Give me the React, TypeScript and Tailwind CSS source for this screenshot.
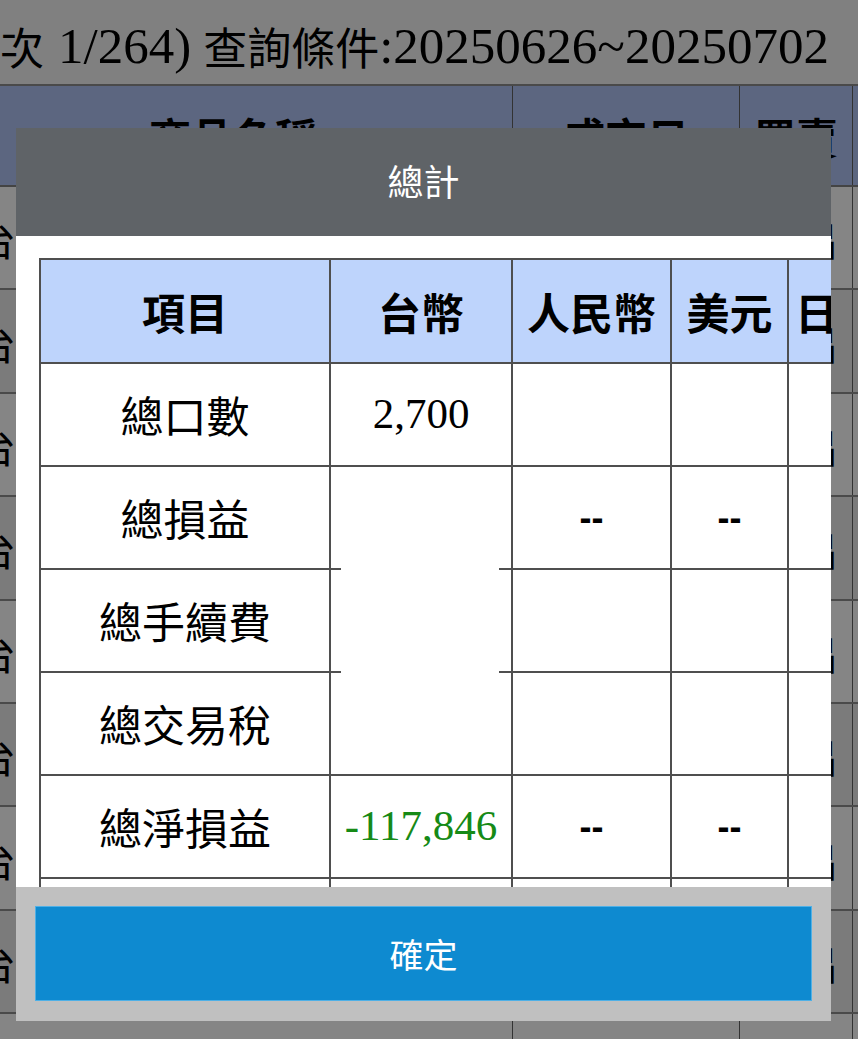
import React from 'react'

const cjk = "font-['Noto_Sans_CJK_TC','Noto_Sans',sans-serif]"
const serif = "font-['Liberation_Serif','Noto_Sans_CJK_TC',serif]"

const bgRows = ['賣', '買', '買', '賣', '賣', '買', '買', '賣', '賣']

const rows: { label: string; twd?: string; green?: boolean; cny?: string; usd?: string; hide?: boolean }[] = [
  { label: '總口數', twd: '2,700' },
  { label: '總損益', cny: '--', usd: '--' },
  { label: '總手續費', hide: true },
  { label: '總交易稅', hide: true },
  { label: '總淨損益', twd: '-117,846', green: true, cny: '--', usd: '--' },
  { label: '' },
]

function Background() {
  return (
    <div className="flex flex-col">
      {/* query line */}
      <div className={`h-[84px] pt-[8px] flex items-center whitespace-nowrap text-[51px] leading-none text-black ${serif}`}>
        <span className={`${cjk} text-[44px]`}>次</span>
        <span className="ml-[14px]">1/264)</span>
        <span className={`${cjk} text-[44px] ml-[12px]`}>查詢條件</span>
        <span>:20250626~20250702</span>
      </div>
      <div className="h-[2px] bg-[#4a4a4a]" />
      <div className="-ml-[46px] flex flex-col">
        <div className={`flex h-[101px] bg-[#5c6680] border-b-2 border-[#444] text-[42px] font-bold text-black ${cjk}`}>
          <div className="w-[558px] shrink-0 flex items-center justify-center">商品名稱</div>
          <div className="w-[227px] shrink-0 border-l border-[#333] flex items-center justify-center">成交日</div>
          <div className="w-[113px] shrink-0 border-l border-[#333] flex items-center justify-center">買賣</div>
          <div className="w-[120px] shrink-0 border-l border-[#333]" />
        </div>
        {bgRows.map((s, i) => (
          <div
            key={i}
            className={`flex h-[103.4px] border-b-2 border-[#4a4a4a] text-[42px] text-black ${cjk} ${i % 2 === 0 ? 'bg-[#858585]' : 'bg-[#7b7b7b]'}`}
          >
            <div className="w-[558px] shrink-0 flex items-center pl-[20px]">台指期</div>
            <div className="w-[227px] shrink-0 border-l border-[#333]" />
            <div className="w-[113px] shrink-0 border-l border-[#333] flex items-center justify-center whitespace-nowrap">{s}出</div>
            <div className="w-[120px] shrink-0 border-l border-[#333]" />
          </div>
        ))}
      </div>
    </div>
  )
}

export default function App() {
  return (
    <div className="relative w-[858px] h-[1039px] overflow-hidden bg-[#808080]">
      <Background />

      {/* 總計 modal */}
      <div className="absolute left-[16px] top-[128px] w-[815px] h-[893px] flex flex-col">
        <div className={`h-[108px] pb-[4px] bg-[#5f6367] flex items-center justify-center text-white text-[36px] ${cjk}`}>
          總計
        </div>
        <div className="flex-1 bg-white overflow-hidden pl-[23px] pt-[22px]">
          <table className={`table-fixed border-collapse w-[866px] text-black ${cjk}`}>
            <thead>
              <tr className="h-[104px] bg-[#bed4fc] text-[43px] font-bold">
                <th className="w-[290px] border-2 border-[#4f4f4f]">項目</th>
                <th className="w-[182px] border-2 border-[#4f4f4f]">台幣</th>
                <th className="w-[159px] border-2 border-[#4f4f4f] whitespace-nowrap">人民幣</th>
                <th className="w-[117px] border-2 border-[#4f4f4f]">美元</th>
                <th className="w-[118px] border-2 border-[#4f4f4f] text-left pl-[6px]">日幣</th>
              </tr>
            </thead>
            <tbody>
              {rows.map((r, i) => (
                <tr key={i} className="h-[103px] text-[43px]">
                  <td className="border-2 border-[#4f4f4f] text-center">{r.label}</td>
                  <td
                    className={`relative border-2 border-[#4f4f4f] text-center text-[43px] ${serif} ${r.green ? 'text-[#168a16]' : ''}`}
                  >
                    {r.twd}
                    {r.hide && <div className="absolute -top-[3px] left-[10px] right-[12px] h-[5px] bg-white" />}
                  </td>
                  <td className="border-2 border-[#4f4f4f] text-center text-[36px] font-bold font-['Liberation_Sans',sans-serif]">
                    {r.cny}
                  </td>
                  <td className="border-2 border-[#4f4f4f] text-center text-[36px] font-bold font-['Liberation_Sans',sans-serif]">
                    {r.usd}
                  </td>
                  <td className="border-2 border-[#4f4f4f]" />
                </tr>
              ))}
            </tbody>
          </table>
        </div>
        <div className="h-[134px] bg-[#c0c0c0] px-[19px] pt-[19px] pb-[20px]">
          <button className={`w-full h-full bg-[#0e8ad0] border border-[#4fb0e6] text-white text-[34px] ${cjk}`}>
            確定
          </button>
        </div>
      </div>
    </div>
  )
}
